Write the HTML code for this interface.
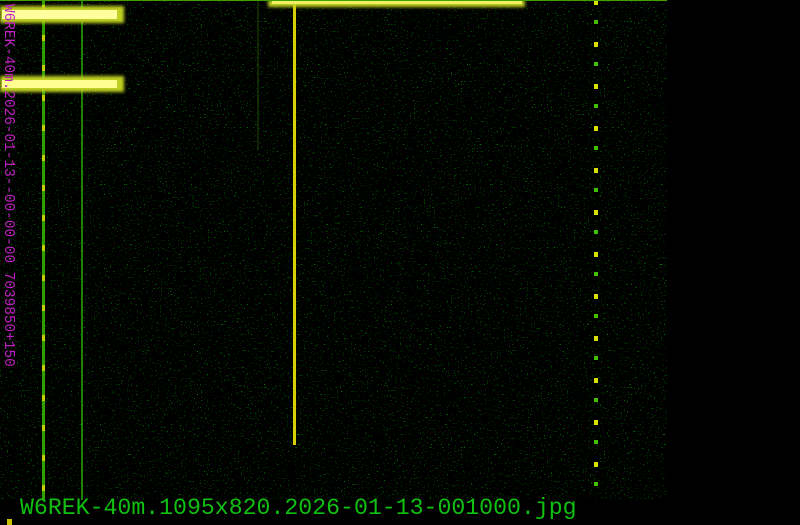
<!DOCTYPE html>
<html><head><style>
html,body{margin:0;padding:0;background:#000;width:800px;height:525px;overflow:hidden;position:relative}
.a{position:absolute}
</style></head><body>
<svg class="a" style="left:0;top:0" width="800" height="525">
<defs>
<filter id="n" x="0" y="0" width="100%" height="100%">
<feTurbulence type="fractalNoise" baseFrequency="0.7" numOctaves="1" seed="3"/>
<feColorMatrix type="matrix" values="0 0 0 0 0  0 0 0 0 0.55  0 0 0 0 0  0 18 0 0 -12"/>
</filter>
<filter id="b"><feGaussianBlur stdDeviation="1.5"/></filter>
<pattern id="d" width="4" height="42" patternUnits="userSpaceOnUse"><rect y="0" width="4" height="5" fill="#d8e000"/><rect y="20" width="4" height="4" fill="#40c000"/></pattern>
<pattern id="g" width="3" height="30" patternUnits="userSpaceOnUse"><rect width="3" height="30" fill="#30a000"/><rect y="5" width="3" height="6" fill="#c0d000"/></pattern>
</defs>
<rect x="0" y="0" width="667" height="500" filter="url(#n)" opacity="0.6"/>
<rect x="42" y="0" width="3" height="500" fill="url(#g)"/>
<rect x="81" y="0" width="2" height="500" fill="#208000"/>
<rect x="293" y="0" width="3" height="445" fill="#d8d000"/>
<rect x="594" y="0" width="4" height="500" fill="url(#d)"/>
<rect x="257" y="0" width="2" height="150" fill="#206000" opacity="0.4"/>
<g filter="url(#b)">
<rect x="0" y="6" width="124" height="17" fill="#c0d020"/>
<rect x="0" y="76" width="124" height="16" fill="#c0d020"/>
<rect x="268" y="0" width="257" height="7" fill="#c0d020"/>
</g>
<rect x="2" y="10" width="115" height="9" fill="#ffffa0"/>
<rect x="2" y="80" width="115" height="8" fill="#ffff90"/>
<rect x="272" y="0" width="250" height="4" fill="#f0f060"/>
<rect x="0" y="0" width="667" height="1" fill="#40a000"/>
<rect x="7" y="519" width="5" height="6" fill="#c8c000"/>
</svg>
<div class="a" style="left:20px;top:494px;font:23.2px 'Liberation Mono',monospace;color:#10c010;line-height:28px;white-space:nowrap">W6REK-40m.1095x820.2026-01-13-001000.jpg</div>
<div class="a" style="left:14px;top:4px;transform-origin:0 0;transform:rotate(90deg);font:14.4px 'Liberation Mono',monospace;color:#c020c0;line-height:12px;white-space:nowrap">W6REK-40m.2026-01-13--00-00-00 7039850+150</div>
</body></html>
